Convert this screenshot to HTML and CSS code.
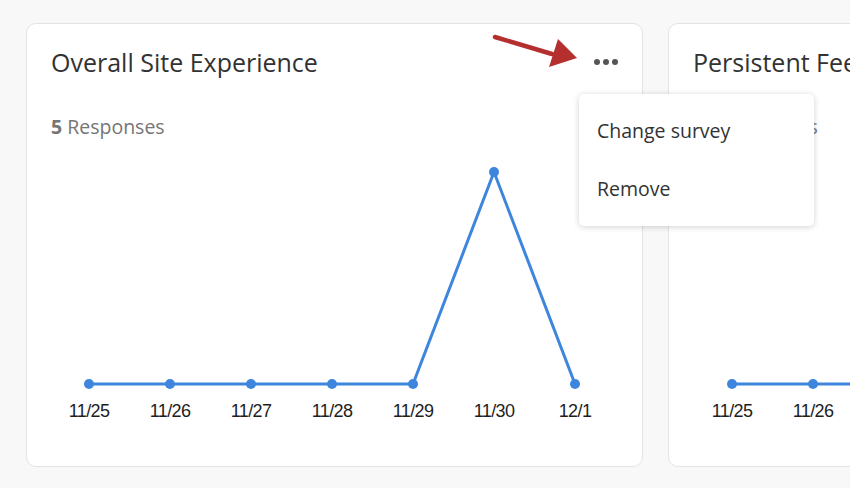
FILE: index.html
```html
<!DOCTYPE html>
<html lang="en">
<head>
    <meta charset="UTF-8">
    <meta name="viewport" content="width=device-width, initial-scale=1.0">
    <title>Dashboard Widgets</title>
    <link rel="stylesheet" href="styles.css">
</head>
<body>
    <div class="board">
        <div class="card card-active">
            <div class="card-header">
                <h2>Overall Site Experience</h2>
                <button class="more-btn" aria-label="More options">
                    <span class="dot"></span><span class="dot"></span><span class="dot"></span>
                </button>
            </div>
            <p class="responses"><strong>5</strong> Responses</p>
            <svg class="chart" width="617" height="280" viewBox="0 0 617 280">
                <polyline class="line" points="63,223 144,223 225,223 306,223 387,223 468,11 549,223"></polyline>
                <g class="points">
                    <circle cx="63" cy="223" r="5"></circle>
                    <circle cx="144" cy="223" r="5"></circle>
                    <circle cx="225" cy="223" r="5"></circle>
                    <circle cx="306" cy="223" r="5"></circle>
                    <circle cx="387" cy="223" r="5"></circle>
                    <circle cx="468" cy="11" r="5"></circle>
                    <circle cx="549" cy="223" r="5"></circle>
                </g>
                <g class="labels">
                    <text x="63" y="256">11/25</text>
                    <text x="144" y="256">11/26</text>
                    <text x="225" y="256">11/27</text>
                    <text x="306" y="256">11/28</text>
                    <text x="387" y="256">11/29</text>
                    <text x="468" y="256">11/30</text>
                    <text x="549" y="256">12/1</text>
                </g>
            </svg>

            <ul class="menu">
                <li>Change survey</li>
                <li>Remove</li>
            </ul>
        </div>

        <div class="card">
            <div class="card-header">
                <h2>Persistent Feedback</h2>
            </div>
            <p class="responses"><strong>12</strong> Responses</p>
            <svg class="chart" width="617" height="280" viewBox="0 0 617 280">
                <polyline class="line" points="64,223 145,223 226,223 307,223 388,223 469,223 550,223"></polyline>
                <g class="points">
                    <circle cx="64" cy="223" r="5"></circle>
                    <circle cx="145" cy="223" r="5"></circle>
                    <circle cx="226" cy="223" r="5"></circle>
                    <circle cx="307" cy="223" r="5"></circle>
                    <circle cx="388" cy="223" r="5"></circle>
                    <circle cx="469" cy="223" r="5"></circle>
                    <circle cx="550" cy="223" r="5"></circle>
                </g>
                <g class="labels">
                    <text x="64" y="256">11/25</text>
                    <text x="145" y="256">11/26</text>
                    <text x="226" y="256">11/27</text>
                    <text x="307" y="256">11/28</text>
                    <text x="388" y="256">11/29</text>
                    <text x="469" y="256">11/30</text>
                    <text x="550" y="256">12/1</text>
                </g>
            </svg>
        </div>
    </div>

    <!-- callout arrow pointing at the options button -->
    <svg class="callout" width="100" height="45" viewBox="0 0 100 45">
        <line x1="15" y1="12" x2="72" y2="29" stroke="#b52f2f" stroke-width="4.5" stroke-linecap="round"></line>
        <polygon points="78,14 97,33 69,42" fill="#b52f2f"></polygon>
    </svg>
</body>
</html>
```

FILE: styles.css
```css
* {
    margin: 0;
    padding: 0;
    box-sizing: border-box;
}
body {
    font-family: 'Open Sans', 'Noto Sans', sans-serif;
    background-color: #f8f8f8;
    color: #323232;
    overflow: hidden;
    position: relative;
    height: 488px;
}
.board {
    display: flex;
    gap: 25px;
    padding: 23px 0 0 26px;
    width: 1400px;
}
.card {
    position: relative;
    width: 617px;
    height: 444px;
    flex-shrink: 0;
    background-color: #fff;
    border: 1.5px solid #e3e3e3;
    border-radius: 10px;
}
.card-active {
    z-index: 2;
}
.card-header {
    display: flex;
    justify-content: space-between;
    align-items: center;
    padding: 19px 24px 0 24px;
    height: 56px;
}
h2 {
    font-size: 25px;
    font-weight: 400;
    color: #323232;
}
.more-btn {
    display: flex;
    gap: 3px;
    background: none;
    border: none;
    padding: 4px 0;
    cursor: pointer;
    margin-top: 1px;
}
.dot {
    width: 6px;
    height: 6px;
    border-radius: 50%;
    background-color: #555;
}
.responses {
    margin-top: 33px;
    padding-left: 24px;
    font-size: 19.5px;
    color: #757575;
}
.responses strong {
    font-weight: 700;
}
.chart {
    display: block;
    margin-top: 21px;
    margin-left: -1.5px;
}
.line {
    fill: none;
    stroke: #3e86dd;
    stroke-width: 3;
    stroke-linejoin: round;
}
.points circle {
    fill: #3e86dd;
}
.labels text {
    font-family: 'Liberation Sans', Arial, sans-serif;
    font-size: 18px;
    letter-spacing: -0.6px;
    fill: #1e1e1e;
    text-anchor: middle;
}
.menu {
    position: absolute;
    left: 552px;
    top: 70px;
    width: 235px;
    list-style-type: none;
    padding: 8px 0;
    background-color: #fff;
    border-radius: 5px;
    box-shadow: 0 1px 6px rgba(0, 0, 0, 0.18);
}
.menu li {
    height: 58px;
    line-height: 58px;
    padding-left: 18px;
    font-size: 19.5px;
    color: #333;
    cursor: pointer;
}
.callout {
    position: absolute;
    left: 480px;
    top: 25px;
    z-index: 3;
}
```
